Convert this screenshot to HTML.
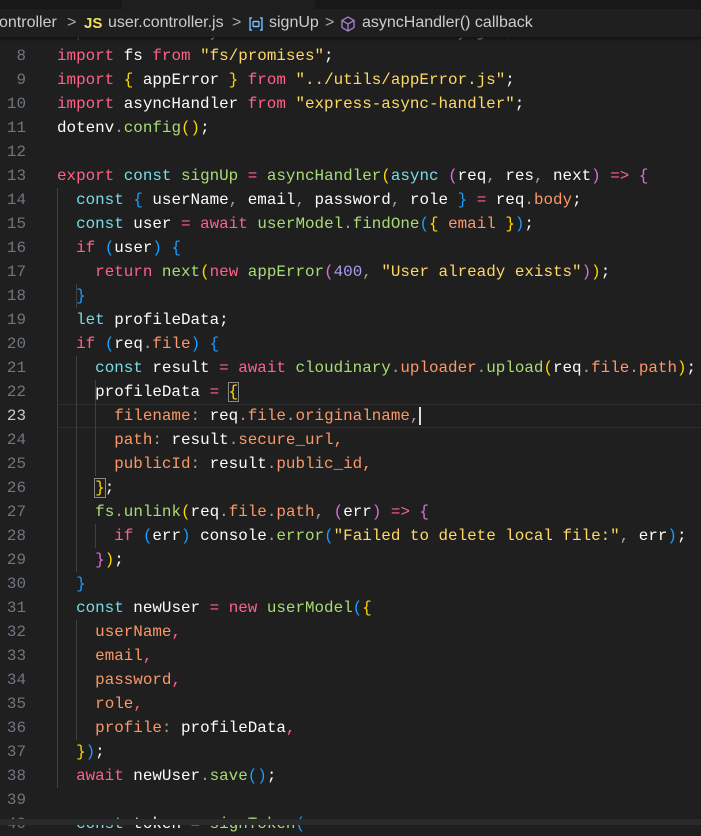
<!DOCTYPE html>
<html><head><meta charset="utf-8"><style>
html,body{margin:0;padding:0;width:701px;height:825px;overflow:hidden;background:#1f1f1f;}
#top{position:absolute;left:0;top:0;width:701px;height:9px;background:#181818;}
#tab{position:absolute;left:122px;top:0;width:193px;height:9px;background:#1f1f1f;}
#bc{position:absolute;left:0;top:9px;width:701px;height:28px;background:#1f1f1f;font-family:"Liberation Sans",sans-serif;font-size:16px;color:#cccccc;white-space:nowrap;z-index:3;box-shadow:0 2px 3px #111;}
#bc span{position:absolute;top:5px;}
.gut{position:absolute;left:0;width:26px;text-align:right;color:#6e7681;}
.code{position:absolute;left:57px;white-space:pre;color:#fcfcfa;}
.ln{position:absolute;left:0;width:701px;height:24px;font-family:"Liberation Mono",monospace;font-size:15.9px;line-height:24px;}
.k{color:#ff6188}.c{color:#78dce8}.f{color:#a9dc76}.s{color:#ffd866}.p{color:#fc9867}.n{color:#ab9df2}.o{color:#a59fa0}
.b1{color:#ffd700}.b2{color:#da70d6}.b3{color:#179fff}
.g{position:absolute;width:1px;background:#404040;}
#cur{position:absolute;left:57px;top:404px;width:644px;height:22px;border:1px solid #2e2e2e;border-right:none;}
#sb{position:absolute;left:0;top:819px;width:701px;height:6px;background:#2a2a2a;}
</style></head><body>
<div id="top"></div><div id="tab"></div>
<div id="bc">
<span style="left:-1px">ontroller</span>
<span style="left:67px;color:#aaa">&gt;</span>
<span style="left:84px;color:#f1e05a;font-weight:bold;font-size:15px;top:6px">JS</span>
<span style="left:108px">user.controller.js</span>
<span style="left:232px;color:#aaa">&gt;</span>
<span style="left:247px;top:6px"><svg width="18" height="18" viewBox="0 0 18 18"><path d="M5 3H3v12h2M13 3h2v12h-2" fill="none" stroke="#75beff" stroke-width="1.4"/><rect x="6" y="6.5" width="6" height="5" rx="1" fill="none" stroke="#75beff" stroke-width="1.4"/></svg></span>
<span style="left:269px">signUp</span>
<span style="left:325px;color:#aaa">&gt;</span>
<span style="left:339px;top:6px"><svg width="18" height="18" viewBox="0 0 18 18"><path d="M9 2l6 3.5v7L9 16l-6-3.5v-7z M3 5.5L9 9l6-3.5M9 9v7" fill="none" stroke="#b180d7" stroke-width="1.3"/></svg></span>
<span style="left:362px">asyncHandler() callback</span>
</div>
<div id="cur"></div>
<div class="g" style="left:57px;top:188px;height:600px"></div>
<div class="g" style="left:76px;top:284px;height:24px"></div>
<div class="g" style="left:76px;top:356px;height:216px"></div>
<div class="g" style="left:95px;top:380px;height:96px"></div>
<div class="g" style="left:95px;top:524px;height:24px"></div>
<div class="g" style="left:76px;top:620px;height:120px"></div>

<div class="ln" style="top:20px"><span class="gut">7</span><span class="code"><span class="k">import</span> cloudinary <span class="k">from</span> <span class="s">"../utils/cloudinary.js"</span><span class="o">;</span></span></div>
<div class="ln" style="top:44px"><span class="gut">8</span><span class="code"><span class="k">import</span> fs <span class="k">from</span> <span class="s">"fs/promises"</span>;</span></div>
<div class="ln" style="top:68px"><span class="gut">9</span><span class="code"><span class="k">import</span> <span class="b1">{</span> appError <span class="b1">}</span> <span class="k">from</span> <span class="s">"../utils/appError.js"</span>;</span></div>
<div class="ln" style="top:92px"><span class="gut">10</span><span class="code"><span class="k">import</span> asyncHandler <span class="k">from</span> <span class="s">"express-async-handler"</span>;</span></div>
<div class="ln" style="top:116px"><span class="gut">11</span><span class="code">dotenv<span class="o">.</span><span class="f">config</span><span class="b1">()</span>;</span></div>
<div class="ln" style="top:140px"><span class="gut">12</span></div>
<div class="ln" style="top:164px"><span class="gut">13</span><span class="code"><span class="k">export</span> <span class="c">const</span> <span class="f">signUp</span> <span class="k">=</span> <span class="f">asyncHandler</span><span class="b1">(</span><span class="c">async</span> <span class="b2">(</span>req<span class="o">,</span> res<span class="o">,</span> next<span class="b2">)</span> <span class="k">=&gt;</span> <span class="b2">{</span></span></div>
<div class="ln" style="top:188px"><span class="gut">14</span><span class="code">  <span class="c">const</span> <span class="b3">{</span> userName<span class="o">,</span> email<span class="o">,</span> password<span class="o">,</span> role <span class="b3">}</span> <span class="k">=</span> req<span class="o">.</span><span class="p">body</span>;</span></div>
<div class="ln" style="top:212px"><span class="gut">15</span><span class="code">  <span class="c">const</span> user <span class="k">=</span> <span class="k">await</span> <span class="f">userModel</span><span class="o">.</span><span class="f">findOne</span><span class="b3">(</span><span class="b1">{</span> <span class="p">email</span> <span class="b1">}</span><span class="b3">)</span>;</span></div>
<div class="ln" style="top:236px"><span class="gut">16</span><span class="code">  <span class="k">if</span> <span class="b3">(</span>user<span class="b3">)</span> <span class="b3">{</span></span></div>
<div class="ln" style="top:260px"><span class="gut">17</span><span class="code">    <span class="k">return</span> <span class="f">next</span><span class="b1">(</span><span class="k">new</span> <span class="f">appError</span><span class="b2">(</span><span class="n">400</span><span class="o">,</span> <span class="s">"User already exists"</span><span class="b2">)</span><span class="b1">)</span>;</span></div>
<div class="ln" style="top:284px"><span class="gut">18</span><span class="code">  <span class="b3">}</span></span></div>
<div class="ln" style="top:308px"><span class="gut">19</span><span class="code">  <span class="c">let</span> profileData;</span></div>
<div class="ln" style="top:332px"><span class="gut">20</span><span class="code">  <span class="k">if</span> <span class="b3">(</span>req<span class="o">.</span><span class="p">file</span><span class="b3">)</span> <span class="b3">{</span></span></div>
<div class="ln" style="top:356px"><span class="gut">21</span><span class="code">    <span class="c">const</span> result <span class="k">=</span> <span class="k">await</span> <span class="f">cloudinary</span><span class="o">.</span><span class="p">uploader</span><span class="o">.</span><span class="f">upload</span><span class="b1">(</span>req<span class="o">.</span><span class="p">file</span><span class="o">.</span><span class="p">path</span><span class="b1">)</span>;</span></div>
<div class="ln" style="top:380px"><span class="gut">22</span><span class="code">    profileData <span class="k">=</span> <span class="b1" style="outline:1px solid #888">{</span></span></div>
<div class="ln" style="top:404px"><span class="gut" style="color:#cccccc">23</span><span class="code">      <span class="p">filename</span><span class="o">:</span> req<span class="o">.</span><span class="p">file</span><span class="o">.</span><span class="p">originalname</span><span class="o">,</span><span style="border-left:2px solid #ddd"></span></span></div>
<div class="ln" style="top:428px"><span class="gut">24</span><span class="code">      <span class="p">path</span><span class="o">:</span> result<span class="o">.</span><span class="p">secure_url</span><span class="p">,</span></span></div>
<div class="ln" style="top:452px"><span class="gut">25</span><span class="code">      <span class="p">publicId</span><span class="o">:</span> result<span class="o">.</span><span class="p">public_id</span><span class="p">,</span></span></div>
<div class="ln" style="top:476px"><span class="gut">26</span><span class="code">    <span class="b1" style="outline:1px solid #888">}</span>;</span></div>
<div class="ln" style="top:500px"><span class="gut">27</span><span class="code">    <span class="f">fs</span><span class="o">.</span><span class="f">unlink</span><span class="b1">(</span>req<span class="o">.</span><span class="p">file</span><span class="o">.</span><span class="p">path</span><span class="o">,</span> <span class="b2">(</span>err<span class="b2">)</span> <span class="k">=&gt;</span> <span class="b2">{</span></span></div>
<div class="ln" style="top:524px"><span class="gut">28</span><span class="code">      <span class="k">if</span> <span class="b3">(</span>err<span class="b3">)</span> console<span class="o">.</span><span class="f">error</span><span class="b3">(</span><span class="s">"Failed to delete local file:"</span><span class="o">,</span> err<span class="b3">)</span>;</span></div>
<div class="ln" style="top:548px"><span class="gut">29</span><span class="code">    <span class="b2">}</span><span class="b1">)</span>;</span></div>
<div class="ln" style="top:572px"><span class="gut">30</span><span class="code">  <span class="b3">}</span></span></div>
<div class="ln" style="top:596px"><span class="gut">31</span><span class="code">  <span class="c">const</span> newUser <span class="k">=</span> <span class="k">new</span> <span class="f">userModel</span><span class="b3">(</span><span class="b1">{</span></span></div>
<div class="ln" style="top:620px"><span class="gut">32</span><span class="code">    <span class="p">userName</span><span class="k">,</span></span></div>
<div class="ln" style="top:644px"><span class="gut">33</span><span class="code">    <span class="p">email</span><span class="k">,</span></span></div>
<div class="ln" style="top:668px"><span class="gut">34</span><span class="code">    <span class="p">password</span><span class="k">,</span></span></div>
<div class="ln" style="top:692px"><span class="gut">35</span><span class="code">    <span class="p">role</span><span class="k">,</span></span></div>
<div class="ln" style="top:716px"><span class="gut">36</span><span class="code">    <span class="p">profile</span><span class="o">:</span> profileData<span class="k">,</span></span></div>
<div class="ln" style="top:740px"><span class="gut">37</span><span class="code">  <span class="b1">}</span><span class="b3">)</span>;</span></div>
<div class="ln" style="top:764px"><span class="gut">38</span><span class="code">  <span class="k">await</span> newUser<span class="o">.</span><span class="f">save</span><span class="b3">()</span>;</span></div>
<div class="ln" style="top:788px"><span class="gut">39</span></div>
<div class="ln" style="top:812px"><span class="gut">40</span><span class="code">  <span class="c">const</span> token <span class="k">=</span> <span class="f">signToken</span><span class="b3">(</span></span></div>
<div id="sb"></div>
</body></html>
